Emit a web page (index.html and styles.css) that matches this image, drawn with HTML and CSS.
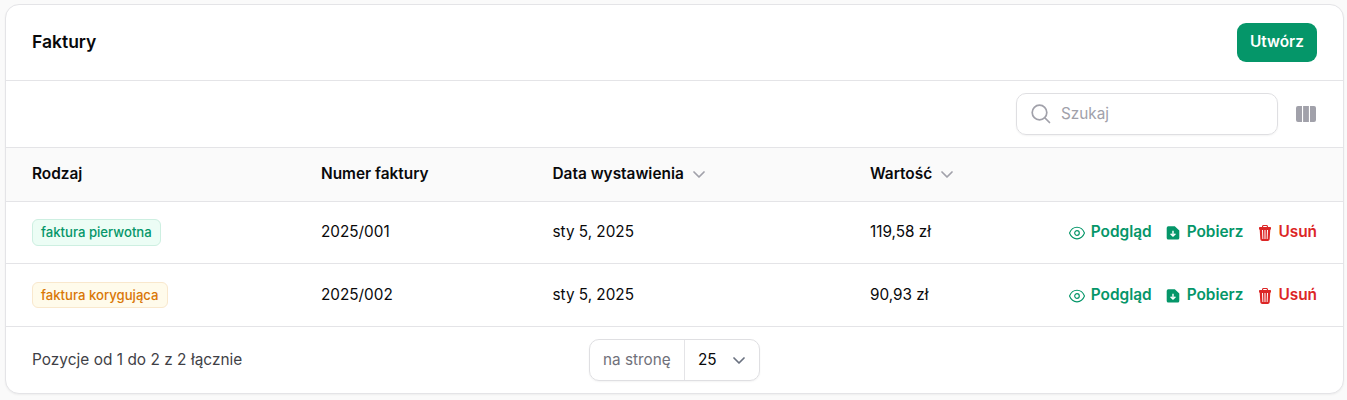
FILE: index.html
```
<!DOCTYPE html>
<html lang="pl">
<head>
<meta charset="utf-8">
<title>Faktury</title>
<link rel="stylesheet" href="styles.css">
</head>
<body>
<svg width="0" height="0" class="sprite">
  <symbol id="eye" viewBox="0 0 16 14"><path d="M.5 7C2 3.200 4.800 1.200 8 1.200S14 3.200 15.500 7C14 10.800 11.200 12.800 8 12.800S2 10.800.5 7Z" fill="none" stroke="currentColor" stroke-width="1.150"/><circle cx="8" cy="7" r="2.300" fill="none" stroke="currentColor" stroke-width="1.200"/></symbol>
  <symbol id="file-down" viewBox="0 0 14 14"><path fill="currentColor" fill-rule="evenodd" d="M2.300.3h6.500L13.300 4.500V12a1.600 1.600 0 0 1-1.600 1.600H2.300A1.600 1.600 0 0 1 .7 12V1.900A1.600 1.600 0 0 1 2.300.3ZM6.300 4.800v3.600L5.100 7.300l-1 1L7 11.100l2.900-2.800-1-1-1.200 1.100V4.800Z"/></symbol>
  <symbol id="trash" viewBox="0 0 12 16"><path fill="currentColor" fill-rule="evenodd" d="M3 2V1.500C3 .6 3.600 0 4.500 0h3C8.400 0 9 .6 9 1.500V2h2.300c.4 0 .7.300.7.700V4c0 .4-.3.700-.7.700L10.700 14c-.1 1.200-.9 2-2 2H3.300c-1.100 0-1.900-.8-2-2L.7 4.700C.3 4.700 0 4.400 0 4V2.700C0 2.300.3 2 .7 2H3Zm1.100 0h3.800v-.4c0-.3-.2-.5-.5-.5H4.600c-.3 0-.5.200-.5.500V2ZM3 5l.4 9h.9L4 5H3Zm2.500 0v9h1V5h-1ZM8 5l-.3 9h.9L9 5H8Z"/></symbol>
  <symbol id="chevron" viewBox="0 0 12 7"><path d="m1 1 5 5 5-5" fill="none" stroke="currentColor" stroke-width="1.700" stroke-linecap="round" stroke-linejoin="round"/></symbol>
</svg>
<main class="card">
  <header class="header">
    <h1 class="title">Faktury</h1>
    <button class="create">Utwórz</button>
  </header>
  <div class="toolbar">
    <label class="search">
      <svg class="search-icon" viewBox="0 0 20 20" fill="none" stroke="currentColor" stroke-width="1.700" stroke-linecap="round"><circle cx="8.500" cy="8.500" r="7.300"/><path d="m14 14 4.500 4.500"/></svg>
      <input class="search-input" type="text" placeholder="Szukaj">
    </label>
    <svg class="columns" viewBox="0 0 20 16" fill="currentColor"><path d="M2 0h4v16H2a2 2 0 0 1-2-2V2a2 2 0 0 1 2-2ZM7.100 0h5.800v16H7.100ZM14 0h4a2 2 0 0 1 2 2v12a2 2 0 0 1-2 2h-4Z"/></svg>
  </div>
  <div class="row head">
    <span>Rodzaj</span>
    <span>Numer faktury</span>
    <span class="sortable">Data wystawienia <svg class="sort"><use href="#chevron"/></svg></span>
    <span class="sortable">Wartość <svg class="sort"><use href="#chevron"/></svg></span>
  </div>
  <div class="row first">
    <span><span class="badge success">faktura pierwotna</span></span>
    <span>2025/001</span>
    <span>sty 5, 2025</span>
    <span>119,58 zł</span>
    <div class="actions">
      <a class="action"><svg class="eye"><use href="#eye"/></svg>Podgląd</a>
      <a class="action"><svg class="file"><use href="#file-down"/></svg>Pobierz</a>
      <a class="action danger"><svg class="trash"><use href="#trash"/></svg>Usuń</a>
    </div>
  </div>
  <div class="row second">
    <span><span class="badge warning">faktura korygująca</span></span>
    <span>2025/002</span>
    <span>sty 5, 2025</span>
    <span>90,93 zł</span>
    <div class="actions">
      <a class="action"><svg class="eye"><use href="#eye"/></svg>Podgląd</a>
      <a class="action"><svg class="file"><use href="#file-down"/></svg>Pobierz</a>
      <a class="action danger"><svg class="trash"><use href="#trash"/></svg>Usuń</a>
    </div>
  </div>
  <footer class="footer">
    <span class="summary">Pozycje od 1 do 2 z 2 łącznie</span>
    <div class="per-page">
      <span class="per-label">na stronę</span>
      <span class="per-value">25 <svg class="per-chevron"><use href="#chevron"/></svg></span>
    </div>
  </footer>
</main>
</body>
</html>
```
FILE: styles.css
```
* { box-sizing: border-box; }
body {
  margin: 0;
  padding: 4px 3px 0 5px;
  height: 400px;
  overflow: hidden;
  background: #fafafa;
  color: #09090b;
  font: 400 15.300px/24px Inter, sans-serif;
}
svg { display: block; flex: none; }
.sprite { position: absolute; }
.card {
  height: 390px;
  background: #fff;
  border: 1px solid #e4e4e7;
  border-radius: 14px;
  box-shadow: 0 1px 2px rgba(0, 0, 0, .05);
  overflow: hidden;
}
.header {
  display: flex;
  align-items: center;
  justify-content: space-between;
  height: 76px;
  padding: 0 26px;
  border-bottom: 1px solid #e4e4e7;
}
.title { margin: 0; padding-bottom: 2px; font-size: 17.500px; font-weight: 600; }
.create {
  width: 80px;
  height: 39px;
  padding: 0 0 1px;
  border: 0;
  border-radius: 9px;
  background: #059669;
  color: #fff;
  font: 600 15.400px/24px Inter, sans-serif;
}
.toolbar {
  display: flex;
  align-items: center;
  justify-content: flex-end;
  gap: 18px;
  height: 67px;
  padding: 0 27px 0 26px;
  border-bottom: 1px solid #e4e4e7;
  color: #a1a1aa;
}
.search {
  display: flex;
  align-items: center;
  gap: 10px;
  width: 262px;
  height: 42px;
  padding: 0 14px;
  border: 1px solid #dfdfe2;
  border-radius: 10px;
  box-shadow: 0 1px 2px rgba(0, 0, 0, .05);
}
.search-icon { width: 20px; height: 20px; }
.search-input {
  min-width: 0;
  flex: 1;
  padding: 0;
  border: 0;
  outline: 0;
  background: none;
  font: 400 15.300px/24px Inter, sans-serif;
}
.search-input::placeholder { color: #a1a1aa; }
.columns { width: 20px; height: 16px; }
.row {
  display: grid;
  grid-template-columns: 289px 231.500px 317.500px 1fr auto;
  align-items: center;
  padding: 0 26px;
  border-bottom: 1px solid #e4e4e7;
}
.head { height: 54px; padding-bottom: 2px; background: #fafafa; font-size: 15.400px; font-weight: 600; }
.first { height: 62px; padding-bottom: 1px; }
.second { height: 63px; }
.sortable { display: flex; align-items: center; gap: 10px; }
.sort { width: 12px; height: 7px; margin: 2px 0 0 -1px; color: #a1a1aa; }
.badge {
  display: inline-block;
  padding: 0 8px;
  border: 1px solid;
  border-radius: 6px;
  font-size: 13.150px;
  line-height: 24px;
  font-weight: 500;
  vertical-align: middle;
}
.success { line-height: 25px; color: #059669; background: #ecfdf5; border-color: #cdefe1; }
.warning { color: #d97706; background: #fffbeb; border-color: #f9e8cd; }
.actions { display: flex; gap: 15px; font-size: 15.400px; }
.action { display: flex; align-items: center; gap: 6px; color: #059669; font-weight: 600; }
.danger { color: #dc2626; }
.eye { width: 16px; height: 14px; margin-top: 1px; }
.file { width: 14px; height: 14px; margin: 1px 1px 0 -1px; }
.trash { width: 12px; height: 16px; margin: 1px 1px 0 1px; }
.footer {
  display: grid;
  grid-template-columns: 557px auto;
  justify-content: start;
  align-items: center;
  height: 66px;
  padding: 0 26px;
}
.summary { color: #3f3f46; font-size: 15.400px; letter-spacing: .03px; }
.per-page {
  display: flex;
  width: 171px;
  height: 42px;
  border: 1px solid #dfdfe2;
  border-radius: 10px;
  box-shadow: 0 1px 2px rgba(0, 0, 0, .05);
  line-height: 40px;
}
.per-label { width: 95px; padding-left: 13px; border-right: 1px solid #e4e4e7; color: #71717a; }
.per-value { display: flex; flex: 1; align-items: center; justify-content: space-between; padding: 0 14px 0 13px; }
.per-chevron { width: 12px; height: 7px; color: #6b7280; }
```
